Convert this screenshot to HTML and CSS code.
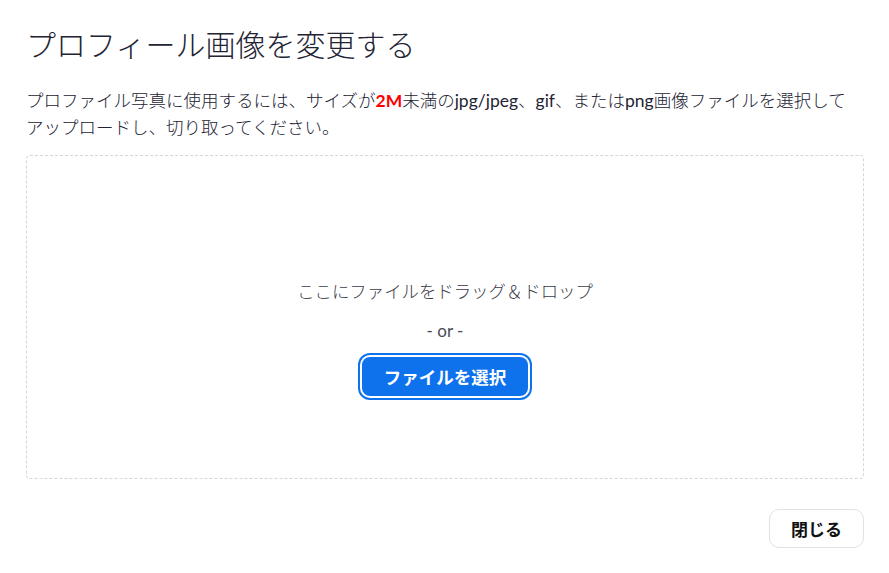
FILE: index.html
```html
<!DOCTYPE html>
<html lang="ja">
<head>
<meta charset="utf-8">
<link rel="stylesheet" href="styles.css">
</head>
<body>
<div class="dialog">
  <h1 class="title">プロフィール画像を変更する</h1>
  <p class="desc">プロファイル写真に使用するには、サイズが<strong class="limit">2M</strong>未満の<span class="lat">jpg/jpeg</span>、<span class="lat">gif</span>、または<span class="lat">png</span>画像ファイルを選択して<br>アップロードし、切り取ってください。</p>
  <div class="dropzone">
    <div class="drop-text">ここにファイルをドラッグ＆ドロップ</div>
    <div class="or">- or -</div>
    <button class="choose">ファイルを選択</button>
  </div>
  <div class="footer">
    <button class="close">閉じる</button>
  </div>
</div>
</body>
</html>
```
FILE: styles.css
```css
* { box-sizing: border-box; }
html, body { margin: 0; padding: 0; background: #fff; }
body {
  font-family: Lato, "Noto Sans CJK JP", sans-serif;
  color: #232333;
}
.dialog {
  padding: 22px 25px 0 26px;
}
.title {
  margin: 0;
  font-size: 30px;
  font-weight: 300;
  line-height: 44px;
  color: #232333;
}
.desc {
  margin: 21px 0 0;
  font-size: 17.5px;
  font-weight: 300;
  line-height: 27px;
  color: #232333;
}
.lat {
  font-weight: 400;
}
.limit {
  color: #ff0000;
  font-weight: 700;
}
.dropzone {
  margin-top: 14px;
  height: 324px;
  border: 1px dashed #d6d6d6;
  border-radius: 4px;
  display: flex;
  flex-direction: column;
  align-items: center;
  padding-top: 124px;
}
.drop-text {
  font-size: 17.4px;
  font-weight: 300;
  line-height: 24px;
  color: #3c3c48;
}
.or {
  margin-top: 15px;
  font-size: 17px;
  font-weight: 400;
  line-height: 24px;
  color: #4a4a55;
}
.choose {
  margin-top: 14px;
  width: 166px;
  height: 39px;
  border: none;
  border-radius: 8px;
  background: #0e72ed;
  color: #fff;
  font-family: Lato, "Noto Sans CJK JP", sans-serif;
  font-size: 17.5px;
  font-weight: 700;
  box-shadow: 0 0 0 2px #fff, 0 0 0 4px #0e72ed;
  cursor: pointer;
}
.footer {
  display: flex;
  justify-content: flex-end;
  margin-top: 30px;
}
.close {
  width: 95px;
  height: 39px;
  background: #fff;
  border: 1px solid #e2e2e6;
  border-radius: 10px;
  font-family: Lato, "Noto Sans CJK JP", sans-serif;
  font-size: 17px;
  font-weight: 700;
  color: #111;
}
```
